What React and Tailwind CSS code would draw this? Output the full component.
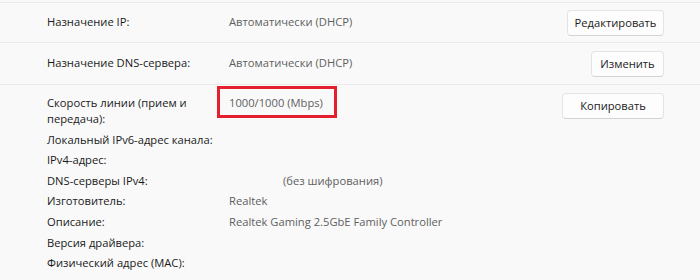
import React from "react";

const font = { fontFamily: '"Open Sans", "Noto Sans", sans-serif' };

function ActionButton({ width, children }) {
  return (
    <button
      type="button"
      className={`h-[26px] shrink-0 rounded-[4px] border border-[#e4e4e4] border-b-[#d3d3d3] bg-[#fdfdfd] text-center text-[11.2px] leading-none text-[#1b1b1b] ${width}`}
    >
      {children}
    </button>
  );
}

const details = [
  ["Локальный IPv6-адрес канала:", ""],
  ["IPv4-адрес:", ""],
  ["DNS-серверы IPv4:", "(без шифрования)", true],
  ["Изготовитель:", "Realtek"],
  ["Описание:", "Realtek Gaming 2.5GbE Family Controller"],
  ["Версия драйвера:", ""],
  ["Физический адрес (MAC):", ""],
];

export default function App() {
  return (
    <div
      className="h-[280px] w-[700px] overflow-hidden bg-[#f9f9f9] pt-[2px] text-[11.2px] text-[#1a1a1a]"
      style={font}
    >
      <div className="flex h-[41px] items-center border-y border-[#ebebeb] pl-[47px] pr-[36px]">
        <div className="w-[182px]">Назначение IP:</div>
        <div className="flex-1 text-[#5f5f5f]">Автоматически (DHCP)</div>
        <ActionButton width="w-[97px]">Редактировать</ActionButton>
      </div>

      <div className="flex h-[42px] items-center border-b border-[#ebebeb] pl-[47px] pr-[36px]">
        <div className="w-[182px]">Назначение DNS-сервера:</div>
        <div className="flex-1 text-[#5f5f5f]">Автоматически (DHCP)</div>
        <ActionButton width="w-[73px]">Изменить</ActionButton>
      </div>

      <div className="flex pl-[47px] pr-[36px] pt-[8px]">
        <div className="flex flex-1 flex-col gap-[4.6px] pt-[2px]">
          <div className="flex leading-[16px]">
            <div className="w-[182px] shrink-0 pr-[28px]">Скорость линии (прием и передача):</div>
            <div className="relative text-[#5f5f5f]">
              <span>1000/1000 (Mbps)</span>
              <span className="absolute left-[-12px] top-[-9px] h-[32px] w-[120px] border-[3px] border-[#e5202e]" />
            </div>
          </div>
          {details.map(([label, value, shifted]) => (
            <div key={label} className="flex leading-[16px]">
              <div className="w-[182px] shrink-0">{label}</div>
              <div className={shifted ? "pl-[54px] text-[#5f5f5f]" : "text-[#5f5f5f]"}>{value}</div>
            </div>
          ))}
        </div>
        <ActionButton width="w-[102px]">Копировать</ActionButton>
      </div>
    </div>
  );
}
